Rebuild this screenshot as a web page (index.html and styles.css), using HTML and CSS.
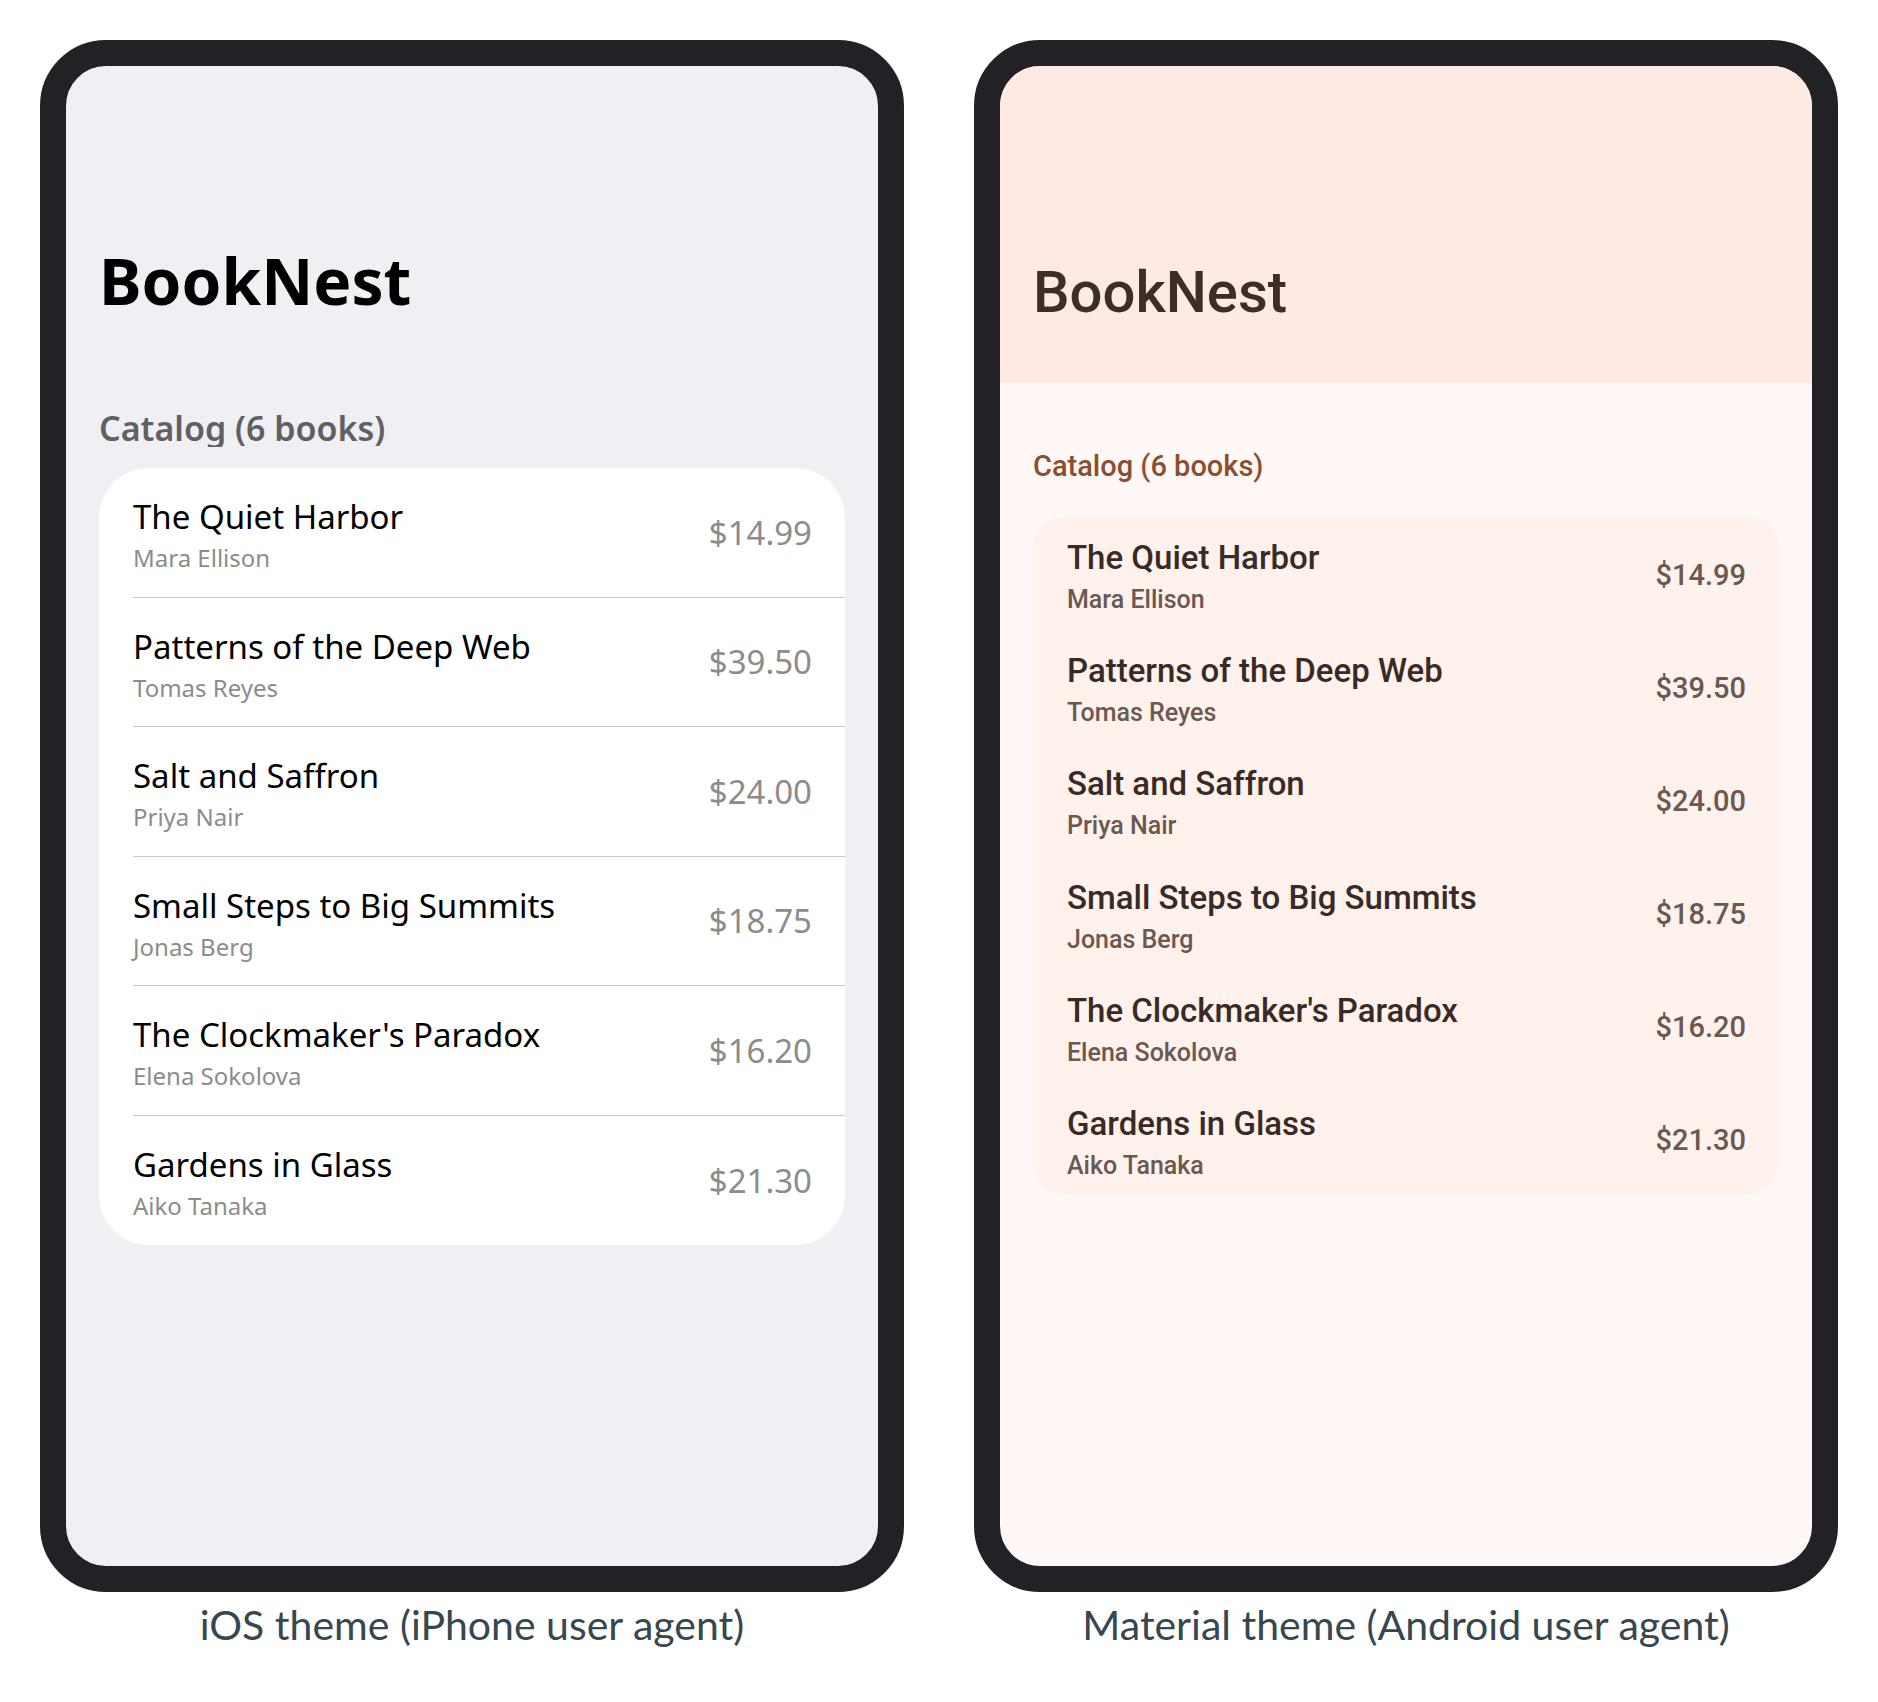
FILE: index.html
```html
<!DOCTYPE html>
<html lang="en">
<head>
  <meta charset="utf-8">
  <meta name="viewport" content="width=device-width, initial-scale=1">
  <title>BookNest</title>
  <link rel="stylesheet" href="styles.css">
</head>
<body>
  <main class="gallery">
    <figure class="device">
      <div class="screen ios">
        <header class="navbar"><h1 class="app-title">BookNest</h1></header>
        <section class="catalog">
          <h2 class="block-title">Catalog (6 books)</h2>
          <ul class="book-list">
            <li class="book"><div class="book-text"><span class="book-name">The Quiet Harbor</span><span class="author">Mara Ellison</span></div><span class="price">$14.99</span></li>
            <li class="book"><div class="book-text"><span class="book-name">Patterns of the Deep Web</span><span class="author">Tomas Reyes</span></div><span class="price">$39.50</span></li>
            <li class="book"><div class="book-text"><span class="book-name">Salt and Saffron</span><span class="author">Priya Nair</span></div><span class="price">$24.00</span></li>
            <li class="book"><div class="book-text"><span class="book-name">Small Steps to Big Summits</span><span class="author">Jonas Berg</span></div><span class="price">$18.75</span></li>
            <li class="book"><div class="book-text"><span class="book-name">The Clockmaker's Paradox</span><span class="author">Elena Sokolova</span></div><span class="price">$16.20</span></li>
            <li class="book"><div class="book-text"><span class="book-name">Gardens in Glass</span><span class="author">Aiko Tanaka</span></div><span class="price">$21.30</span></li>
          </ul>
        </section>
      </div>
      <figcaption class="caption">iOS theme (iPhone user agent)</figcaption>
    </figure>

    <figure class="device">
      <div class="screen material">
        <header class="navbar"><h1 class="app-title">BookNest</h1></header>
        <section class="catalog">
          <h2 class="block-title">Catalog (6 books)</h2>
          <ul class="book-list">
            <li class="book"><div class="book-text"><span class="book-name">The Quiet Harbor</span><span class="author">Mara Ellison</span></div><span class="price">$14.99</span></li>
            <li class="book"><div class="book-text"><span class="book-name">Patterns of the Deep Web</span><span class="author">Tomas Reyes</span></div><span class="price">$39.50</span></li>
            <li class="book"><div class="book-text"><span class="book-name">Salt and Saffron</span><span class="author">Priya Nair</span></div><span class="price">$24.00</span></li>
            <li class="book"><div class="book-text"><span class="book-name">Small Steps to Big Summits</span><span class="author">Jonas Berg</span></div><span class="price">$18.75</span></li>
            <li class="book"><div class="book-text"><span class="book-name">The Clockmaker's Paradox</span><span class="author">Elena Sokolova</span></div><span class="price">$16.20</span></li>
            <li class="book"><div class="book-text"><span class="book-name">Gardens in Glass</span><span class="author">Aiko Tanaka</span></div><span class="price">$21.30</span></li>
          </ul>
        </section>
      </div>
      <figcaption class="caption">Material theme (Android user agent)</figcaption>
    </figure>
  </main>
</body>
</html>
```
FILE: styles.css
```css
* {
  box-sizing: border-box;
}

body,
figure,
h1,
h2,
ul {
  margin: 0;
  padding: 0;
}

body {
  background: #fff;
}

.gallery {
  display: grid;
  grid-template-columns: 1fr 1fr;
  gap: 70px;
  padding: 40px;
}

/* Device frame */
.screen {
  min-height: 1552px;
  border: 26px solid #222126;
  border-radius: 66px;
  overflow: hidden;
}

.caption {
  margin-top: 8px;
  font: 400 41px/50px Lato, sans-serif;
  color: #37474f;
  text-align: center;
}

/* Shared list structure */
.navbar,
.catalog {
  padding: 0 33px;
}

.book-list {
  display: grid;
  grid-auto-rows: 1fr;
  list-style: none;
}

.book {
  display: flex;
  align-items: center;
  justify-content: space-between;
  padding-right: 33px;
  margin-left: 34px;
}

.book-text {
  display: flex;
  flex-direction: column;
  gap: 4px;
}

.book-name {
  line-height: 44px;
}

.author {
  line-height: 32px;
}

/* iOS theme */
.ios {
  background: #efeff4;
  font-family: "Noto Sans", sans-serif;
}

.ios .navbar {
  padding-top: 173px;
}

.ios .app-title {
  font-size: 64px;
  line-height: 84px;
  font-weight: 700;
  color: #000;
}

.ios .block-title {
  margin: 86px 0 21px;
  overflow: hidden;
  font-size: 34px;
  line-height: 38px;
  font-weight: 600;
  color: #606063;
}

.ios .book-list {
  min-height: 777px;
  background: #fff;
  border-radius: 50px;
}

.ios .book {
  border-bottom: 1px solid #c8c8ca;
}

.ios .book:last-child {
  border-bottom: 0;
}

.ios .book-text {
  gap: 3px;
  padding-top: 5px;
}

.ios .book-name {
  font-size: 33px;
  color: #000;
}

.ios .author {
  font-size: 24px;
  color: #8c8c8c;
}

.ios .price {
  font-size: 33px;
  color: #8c8c8c;
}

/* Material theme */
.material {
  background: #fff8f6;
  font-family: Roboto, sans-serif;
  font-weight: 500;
}

.material .navbar {
  padding-top: 188px;
  padding-bottom: 53px;
  background: #feeae2;
}

.material .app-title {
  font-size: 58px;
  line-height: 76px;
  font-weight: 500;
  color: #3e2d26;
}

.material .block-title {
  margin: 64px 0 31px;
  font-size: 29px;
  line-height: 38px;
  font-weight: 500;
  color: #8b4f2f;
}

.material .book-list {
  min-height: 679px;
  background: #fff1eb;
  border-radius: 33px;
}

.material .book-text {
  padding-top: 7px;
}

.material .book-name {
  font-size: 33px;
  color: #3a2a25;
}

.material .author {
  font-size: 25px;
  color: #6b5850;
}

.material .price {
  padding-top: 4px;
  font-size: 29px;
  color: #6b5850;
}

@media (max-width: 1200px) {
  .gallery {
    grid-template-columns: 1fr;
  }
}
```
